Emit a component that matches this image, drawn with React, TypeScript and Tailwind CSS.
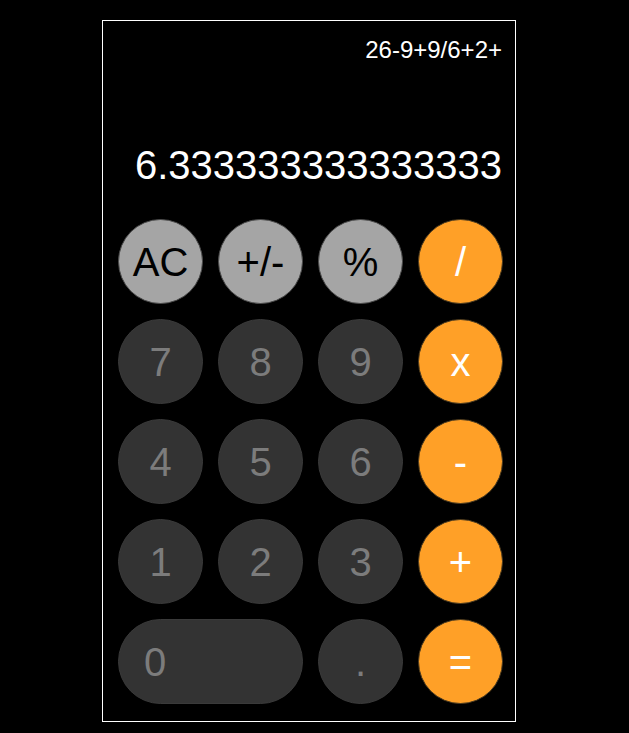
const font = "font-['Liberation_Sans',Arial,sans-serif]";

type Key = { label: string; kind: "fn" | "num" | "op"; wide?: boolean };

const keys: Key[] = [
  { label: "AC", kind: "fn" },
  { label: "+/-", kind: "fn" },
  { label: "%", kind: "fn" },
  { label: "/", kind: "op" },
  { label: "7", kind: "num" },
  { label: "8", kind: "num" },
  { label: "9", kind: "num" },
  { label: "x", kind: "op" },
  { label: "4", kind: "num" },
  { label: "5", kind: "num" },
  { label: "6", kind: "num" },
  { label: "-", kind: "op" },
  { label: "1", kind: "num" },
  { label: "2", kind: "num" },
  { label: "3", kind: "num" },
  { label: "+", kind: "op" },
  { label: "0", kind: "num", wide: true },
  { label: ".", kind: "num" },
  { label: "=", kind: "op" },
];

const kindClass = {
  fn: "bg-[#a5a5a5] text-black border-[#4a4a4a]",
  num: "bg-[#333333] text-[#7c7c7c] border-[#3a3a3a]",
  op: "bg-[#ffa027] text-white border-[#4a3a1f]",
};

function CalcKey({ k }: { k: Key }) {
  return (
    <button
      className={`h-[85px] border rounded-full flex items-center text-[40px] leading-none ${
        k.wide ? "col-span-2 justify-start pl-[25px]" : "justify-center"
      } ${kindClass[k.kind]}`}
    >
      {k.label}
    </button>
  );
}

export default function App() {
  return (
    <div className={`w-full h-[733px] bg-black pt-[20px] pl-[102px] ${font}`}>
      <div className="w-[414px] h-[702px] border border-white flex flex-col">
        {/* Display */}
        <div className="h-[198px] flex flex-col items-end pr-[13px] pt-[15px] text-white">
          <div className="text-[24px] leading-[28px]">26-9+9/6+2+</div>
          <div className="mt-[78px] text-[40px] leading-[46px]">
            6.333333333333333
          </div>
        </div>

        {/* Keypad */}
        <div className="grid grid-cols-[85px_85px_85px_85px] gap-x-[15px] gap-y-[15px] pl-[15px]">
          {keys.map((k) => (
            <CalcKey key={k.label} k={k} />
          ))}
        </div>
      </div>
    </div>
  );
}
